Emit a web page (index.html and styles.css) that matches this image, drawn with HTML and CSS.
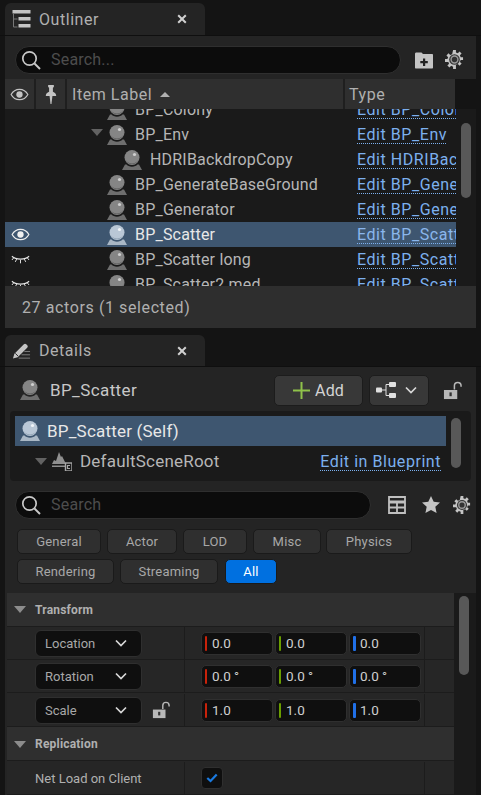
FILE: index.html
```html
<!DOCTYPE html>
<html lang="en">
<head>
  <meta charset="UTF-8">
  <title>Outliner and Details</title>
  <link rel="stylesheet" href="styles.css">
</head>
<body>
  <svg class="defs" width="0" height="0">
    <symbol id="actor" viewBox="0 0 20 20">
      <circle cx="10" cy="7.5" r="7.5" fill="#858585"/>
      <path d="M3.2 7.5a6.8 6.8 0 0 0 13.6 0a6.8 6 0 0 1-13.6 0z" fill="#5e5e5e"/>
      <circle cx="12.5" cy="4.5" r="1.6" fill="#cfcfcf"/>
      <path d="M3 14.5h1.6c1 1.4 3 2.2 5.4 2.2s4.4-.8 5.4-2.2H17l3 5.5H0z" fill="#6e6e6e"/>
    </symbol>
    <symbol id="actor-sel" viewBox="0 0 20 20">
      <circle cx="10" cy="7.5" r="7.5" fill="#b9c7d6"/>
      <path d="M3.2 7.5a6.8 6.8 0 0 0 13.6 0a6.8 6 0 0 1-13.6 0z" fill="#8ea0b2"/>
      <circle cx="12.5" cy="4.5" r="1.6" fill="#f0f4f8"/>
      <path d="M3 14.5h1.6c1 1.4 3 2.2 5.4 2.2s4.4-.8 5.4-2.2H17l3 5.5H0z" fill="#a9b7c5"/>
    </symbol>
    <symbol id="search" viewBox="0 0 20 20">
      <circle cx="8.5" cy="8.5" r="6.7" fill="none" stroke="#c8c8c8" stroke-width="1.7"/>
      <path d="M13.5 13.5l5.5 5.5" stroke="#c8c8c8" stroke-width="1.9"/>
    </symbol>
    <symbol id="gear" viewBox="0 0 20 20">
      <path d="M8.5 0h3v2.5l2 .8 1.8-1.8 2.2 2.2-1.8 1.8.8 2h2.5v3h-2.5l-.8 2 1.8 1.8-2.2 2.2-1.8-1.8-2 .8V20h-3v-2.5l-2-.8-1.8 1.8-2.2-2.2 1.8-1.8-.8-2H0v-3h2.500l.8-2-1.800-1.800 2.200-2.200 1.800 1.800 2-.8z" fill="#c4c4c4"/>
      <circle cx="10" cy="10" r="5.6" fill="#333"/>
      <circle cx="10" cy="10" r="3.6" fill="none" stroke="#9a9a9a" stroke-width="1.5"/>
    </symbol>
    <symbol id="close" viewBox="0 0 10 10">
      <path d="M1.2 1.2l7.6 7.6M8.8 1.2L1.2 8.8" stroke="#d0d0d0" stroke-width="2"/>
    </symbol>
    <symbol id="eye-shut" viewBox="0 0 20 12">
      <path d="M1 2c4 4 14 4 18 0" fill="none" stroke="#e4e4e4" stroke-width="1.3"/>
      <path d="M3 3.5L1 6M6 5l-1.5 3M10 6v3.5M14 5l1.5 3M17 3.5L19 6" stroke="#e4e4e4" stroke-width="1"/>
    </symbol>
    <symbol id="lock" viewBox="0 0 20 20">
      <path d="M12 9V5a3.5 3.5 0 0 1 7 0v1" fill="none" stroke="#b8b8b8" stroke-width="1.6"/>
      <path d="M1 9.500h14V19H1z" fill="#b8b8b8"/>
      <rect x="6.8" y="12" width="2.4" height="4" fill="#333"/>
    </symbol>
    <symbol id="chev" viewBox="0 0 12 8">
      <path d="M1 1.5l5 5 5-5" fill="none" stroke="#d8d8d8" stroke-width="1.7"/>
    </symbol>
  </svg>

  <div class="tab-strip">
    <div class="tab">
      <svg class="tab-icon" viewBox="0 0 18 18">
        <path d="M0 0h18v3.5H0zM6 7h12v3.5H6zM6 14h12v3.5H6z" fill="#c4c4c4"/>
        <path d="M1 4v13h4M1 9h4" fill="none" stroke="#777" stroke-width="1"/>
      </svg>
      <span class="tab-label">Outliner</span>
      <svg class="tab-close"><use href="#close"/></svg>
    </div>
  </div>

  <section class="outliner">
    <div class="toolbar">
      <div class="search search-outliner">
        <svg class="search-icon"><use href="#search"/></svg>
        <span>Search...</span>
      </div>
      <svg class="folder-add" viewBox="0 0 18 18">
        <path d="M0 3c0-1 .5-1.5 1.5-1.5h5L8 3h9c.6 0 1 .4 1 1v12.5c0 .6-.4 1-1 1H1c-.6 0-1-.4-1-1z" fill="#c4c4c4"/>
        <path d="M8 7.5h2.200v2.600h2.600v2.200h-2.600v2.600H8v-2.600H5.300v-2.200H8z" fill="#222"/>
      </svg>
      <svg class="tool-gear"><use href="#gear"/></svg>
    </div>

    <div class="list-head">
      <div class="head-cell head-eye">
        <svg class="eye" viewBox="0 0 20 14">
          <path d="M1 7c4-7.5 14-7.5 18 0c-4 7.5-14 7.5-18 0z" fill="none" stroke="#c4c4c4" stroke-width="1.3"/>
          <circle cx="10" cy="7" r="3.4" fill="#c4c4c4"/>
        </svg>
      </div>
      <div class="head-cell head-pin">
        <svg class="pin" viewBox="0 0 12 20">
          <path d="M3 0h6v2L8 3v4c2 .8 3.5 2.2 3.5 4.5H.5C.5 9.2 2 7.8 4 7V3L3 2z" fill="#c4c4c4"/>
          <path d="M4.5 11.5h3L6.500 20h-1z" fill="#c4c4c4"/>
        </svg>
      </div>
      <div class="head-cell head-label">Item Label <i class="sort-up"></i></div>
      <div class="head-cell head-type">Type</div>
    </div>

    <div class="tree">
      <div class="tree-rows">
        <div class="row"><div class="row-eye"></div><div class="row-name depth-2"><svg class="actor"><use href="#actor"/></svg>BP_Colony</div><div class="row-type"><a>Edit BP_Colony</a></div></div>
        <div class="row"><div class="row-eye"></div><div class="row-name depth-2"><i class="arrow"></i><svg class="actor"><use href="#actor"/></svg>BP_Env</div><div class="row-type"><a>Edit BP_Env</a></div></div>
        <div class="row"><div class="row-eye"></div><div class="row-name depth-3"><svg class="actor"><use href="#actor"/></svg>HDRIBackdropCopy</div><div class="row-type"><a>Edit HDRIBackdropCopy</a></div></div>
        <div class="row"><div class="row-eye"></div><div class="row-name depth-2"><svg class="actor"><use href="#actor"/></svg>BP_GenerateBaseGround</div><div class="row-type"><a>Edit BP_GenerateBaseGround</a></div></div>
        <div class="row"><div class="row-eye"></div><div class="row-name depth-2"><svg class="actor"><use href="#actor"/></svg>BP_Generator</div><div class="row-type"><a>Edit BP_Generator</a></div></div>
        <div class="row selected">
          <div class="row-eye">
            <svg class="eye" viewBox="0 0 20 14">
              <path d="M1 7c4-7.5 14-7.5 18 0c-4 7.5-14 7.5-18 0z" fill="none" stroke="#f0f0f0" stroke-width="1.3"/>
              <circle cx="10" cy="7" r="3.4" fill="#f0f0f0"/>
            </svg>
          </div>
          <div class="row-name depth-2"><svg class="actor"><use href="#actor-sel"/></svg>BP_Scatter</div>
          <div class="row-type"><a>Edit BP_Scatter</a></div>
        </div>
        <div class="row"><div class="row-eye"><svg class="eye-shut"><use href="#eye-shut"/></svg></div><div class="row-name depth-2"><svg class="actor"><use href="#actor"/></svg>BP_Scatter long</div><div class="row-type"><a>Edit BP_Scatter</a></div></div>
        <div class="row"><div class="row-eye"><svg class="eye-shut"><use href="#eye-shut"/></svg></div><div class="row-name depth-2"><svg class="actor"><use href="#actor"/></svg>BP_Scatter2 med</div><div class="row-type"><a>Edit BP_Scatter</a></div></div>
      </div>
      <div class="scroll-thumb tree-thumb"></div>
    </div>

    <div class="status">27 actors (1 selected)</div>
  </section>

  <div class="tab-strip details-strip">
    <div class="tab">
      <svg class="tab-icon" viewBox="0 0 20 18">
        <path d="M1 17l1.500-5L12.500 2c.8-.8 1.700-.8 2.500 0l1 1c.8.8.8 1.700 0 2.500L6 15.500z" fill="#c4c4c4"/>
        <path d="M3.500 11.500l3 3" stroke="#242424" stroke-width="1"/>
        <path d="M13 9.500h6M10 13h9M7 16.500h12" stroke="#808080" stroke-width="1"/>
      </svg>
      <span class="tab-label">Details</span>
      <svg class="tab-close"><use href="#close"/></svg>
    </div>
  </div>

  <section class="details">
    <div class="details-head">
      <svg class="actor actor-head"><use href="#actor"/></svg>
      <span class="details-title">BP_Scatter</span>
      <div class="btn-add">
        <svg class="plus" viewBox="0 0 17 17"><path d="M7.500 0h2v7.500H17v2H9.500V17h-2V9.500H0v-2h7.500z" fill="#8fc24a"/></svg>
        Add
      </div>
      <div class="btn-graph">
        <svg class="graph-icon" viewBox="0 0 20 16">
          <path d="M6 8h4M10 2.500v11M10 2.500h3M10 13.500h3" stroke="#e0e0e0" stroke-width="1" fill="none"/>
          <rect x="0" y="5.5" width="6" height="5" rx="1" fill="#e0e0e0"/>
          <rect x="13" y="0" width="7" height="5" rx="1" fill="#e0e0e0"/>
          <rect x="13" y="11" width="7" height="5" rx="1" fill="#e0e0e0"/>
        </svg>
        <svg class="chev"><use href="#chev"/></svg>
      </div>
      <svg class="head-lock"><use href="#lock"/></svg>
    </div>

    <div class="comp-tree">
      <div class="comp-rows">
        <div class="comp-row comp-selected"><svg class="actor"><use href="#actor-sel"/></svg>BP_Scatter (Self)</div>
        <div class="comp-row comp-root">
          <i class="arrow"></i>
          <svg class="root-icon" viewBox="0 0 20 19">
            <path d="M7 0l2 5 1-1 3 6 1 2H0l2-4 2 1z" fill="#8f8f8f"/>
            <path d="M0 13.500h13V15H0z" fill="#8f8f8f"/>
            <rect x="13.5" y="11" width="6.5" height="8" fill="#1a1a1a" stroke="#a8a8a8" stroke-width="1.4"/>
            <path d="M18 13.500h-2.500v3H18" fill="none" stroke="#a8a8a8" stroke-width="1.2"/>
          </svg>
          DefaultSceneRoot
          <a class="comp-link">Edit in Blueprint</a>
        </div>
      </div>
      <div class="scroll-thumb comp-thumb"></div>
    </div>

    <div class="details-search">
      <div class="search search-details">
        <svg class="search-icon"><use href="#search"/></svg>
        <span>Search</span>
      </div>
      <svg class="table-icon" viewBox="0 0 18 18">
        <path d="M1 1h16v16H1z" fill="none" stroke="#c0c0c0" stroke-width="1.8"/>
        <path d="M1 6h16" stroke="#c0c0c0" stroke-width="3"/>
        <path d="M1 11.500h16M9 6v11" stroke="#c0c0c0" stroke-width="1.8"/>
      </svg>
      <svg class="star" viewBox="0 0 18 17"><path d="M9 0l2.700 5.800 6.300.7-4.700 4.300 1.300 6.200L9 13.900 3.400 17l1.300-6.200L0 6.500l6.300-.7z" fill="#c4c4c4"/></svg>
      <svg class="details-gear"><use href="#gear"/></svg>
    </div>

    <div class="filters">
      <span class="chip chip-general">General</span>
      <span class="chip chip-actor">Actor</span>
      <span class="chip chip-lod">LOD</span>
      <span class="chip chip-misc">Misc</span>
      <span class="chip chip-physics">Physics</span>
      <span class="chip chip-rendering">Rendering</span>
      <span class="chip chip-streaming">Streaming</span>
      <span class="chip chip-all">All</span>
    </div>

    <div class="props">
      <div class="props-list">
        <div class="section-head"><i class="arrow arrow-section"></i>Transform</div>

        <div class="prop-row">
          <div class="prop-left">
            <div class="combo">Location<svg class="chev"><use href="#chev"/></svg></div>
          </div>
          <div class="prop-mid">
            <div class="num"><i class="axis axis-x"></i>0.0</div>
            <div class="num"><i class="axis axis-y"></i>0.0</div>
            <div class="num"><i class="axis axis-z"></i>0.0</div>
          </div>
          <div class="prop-end"></div>
        </div>
        <div class="prop-row">
          <div class="prop-left">
            <div class="combo">Rotation<svg class="chev"><use href="#chev"/></svg></div>
          </div>
          <div class="prop-mid">
            <div class="num"><i class="axis axis-x"></i>0.0 °</div>
            <div class="num"><i class="axis axis-y"></i>0.0 °</div>
            <div class="num"><i class="axis axis-z"></i>0.0 °</div>
          </div>
          <div class="prop-end"></div>
        </div>
        <div class="prop-row prop-low">
          <div class="prop-left">
            <div class="combo">Scale<svg class="chev"><use href="#chev"/></svg></div>
            <svg class="scale-lock"><use href="#lock"/></svg>
          </div>
          <div class="prop-mid">
            <div class="num"><i class="axis axis-x"></i>1.0</div>
            <div class="num"><i class="axis axis-y"></i>1.0</div>
            <div class="num"><i class="axis axis-z"></i>1.0</div>
          </div>
          <div class="prop-end"></div>
        </div>

        <div class="section-head section-low"><i class="arrow arrow-section"></i>Replication</div>

        <div class="prop-row prop-low">
          <div class="prop-left prop-text">Net Load on Client</div>
          <div class="prop-mid">
            <div class="check">
              <svg viewBox="0 0 14 11"><path d="M1.500 5.500l3.800 3.500L12.500 1.500" fill="none" stroke="#1a7ae0" stroke-width="2.6"/></svg>
            </div>
          </div>
          <div class="prop-end"></div>
        </div>
      </div>
      <div class="props-scroll"><div class="scroll-thumb props-thumb"></div></div>
    </div>
  </section>
</body>
</html>
```

FILE: styles.css
```css
* { box-sizing: border-box; }
html, body { height: 100%; }
body { margin: 0; width: 481px; height: 795px; overflow: hidden; background: #141414; color: #b6b6b6; font-family: Roboto, "Liberation Sans", sans-serif; font-size: 16px; letter-spacing: 0.2px; }
i { display: block; }
a { color: #7cb0ee; text-decoration: underline dotted #7cb0ee 1px; text-underline-offset: 3px; white-space: nowrap; letter-spacing: 0.55px; }
.defs { position: absolute; }

.tab-strip { height: 36px; padding: 3px 0 0 5px; border-bottom: 1px solid #0f0f0f; }
.details-strip { height: 32px; padding-top: 0; margin-top: 7px; }
.tab { width: 200px; height: 100%; padding: 0 18px 0 7px; display: flex; align-items: center; background: #242424; border-radius: 6px 6px 0 0; }
.tab-icon { width: 19px; height: 18px; flex: none; margin-right: 8px; }
.tab-label { flex: 1; color: #b0b0b0; letter-spacing: 0.55px; }
.tab-close { width: 10px; height: 10px; flex: none; }

.outliner { width: 471px; margin-left: 5px; }
.toolbar { height: 43px; background: #242424; display: flex; align-items: center; padding: 4px 10px 0; }
.search { height: 28px; border-radius: 14px; background: #0c0c0c; border: 1px solid #2f2f2f; display: flex; align-items: center; padding-left: 5px; color: #4d4d4d; }
.search-icon { width: 20px; height: 20px; flex: none; margin-right: 10px; }
.search-outliner { width: 386px; }
.folder-add { width: 18px; height: 18px; margin-left: 14px; }
.tool-gear { width: 19px; height: 19px; margin-left: 12px; }

.list-head { width: 450px; height: 30px; display: flex; background: #2f2f2f; color: #b0b0b0; letter-spacing: 0.55px; }
.head-cell { display: flex; align-items: center; border-right: 2px solid #1f1f1f; }
.head-eye { width: 31px; justify-content: center; }
.head-pin { width: 31px; justify-content: center; }
.head-label { width: 278px; padding-left: 5px; }
.head-type { flex: 1; padding-left: 4px; border-right: none; }
.eye { width: 19px; height: 13px; }
.pin { width: 12px; height: 19px; }
.sort-up { width: 0; height: 0; margin-left: 8px; border: 5px solid transparent; border-top: 0; border-bottom: 5px solid #b0b0b0; }

.tree { height: 177px; background: #1a1a1a; overflow: hidden; position: relative; }
.tree-rows { width: 451px; margin-top: -12px; }
.row { height: 25px; display: flex; align-items: center; white-space: nowrap; }
.row.selected { background: #3e5670; color: #e8e8e8; }
.row-eye { width: 30px; display: flex; justify-content: center; flex: none; }
.eye-shut { width: 19px; height: 12px; }
.row-name { flex: none; width: 322px; display: flex; align-items: center; position: relative; }
.depth-2 { padding-left: 72px; }
.depth-3 { padding-left: 87px; }
.actor { width: 20px; height: 20px; flex: none; margin-right: 8px; }
.arrow { width: 0; height: 0; border: 6px solid transparent; border-bottom: 0; border-top: 7px solid #626262; }
.row-name .arrow { position: absolute; left: 56px; top: 4px; }
.row-type { width: 99px; overflow: hidden; }
.row.selected a { color: #8ab6ec; }
.scroll-thumb { background: #585858; border-radius: 5px; width: 10px; }
.tree-thumb { position: absolute; left: 456px; top: 14px; height: 75px; }
.status { height: 42px; background: #2e2e2e; padding-left: 17px; display: flex; align-items: center; color: #b0b0b0; letter-spacing: 0.6px; }

.details { width: 471px; height: 428px; margin-left: 5px; background: #242424; }
.details-head { height: 44px; display: flex; align-items: center; padding: 2px 14px 0 15px; }
.actor-head { margin-right: 10px; }
.details-title { flex: 1; color: #c8c8c8; font-size: 17px; letter-spacing: 0.4px; }
.btn-add, .btn-graph { height: 31px; display: flex; align-items: center; background: #383838; border: 1px solid #1c1c1c; border-radius: 5px; color: #d4d4d4; }
.btn-add { width: 89px; padding-left: 18px; gap: 5px; }
.plus { width: 17px; height: 17px; }
.btn-graph { width: 60px; margin-left: 6px; padding-left: 6px; gap: 9px; }
.graph-icon { width: 20px; height: 16px; }
.chev { width: 12px; height: 8px; flex: none; }
.head-lock { width: 19px; height: 19px; margin-left: 14px; }

.comp-tree { width: 461px; height: 70px; margin-left: 5px; background: #1a1a1a; border-radius: 4px; padding: 5px; display: flex; }
.comp-rows { width: 431px; flex: none; }
.comp-row { height: 30px; display: flex; align-items: center; }
.comp-selected { background: #3e5670; color: #e8e8e8; padding-left: 5px; font-size: 17px; }
.comp-selected .actor { margin-right: 7px; }
.comp-root { padding-left: 20px; font-size: 17px; }
.comp-root .arrow { margin-right: 5px; }
.root-icon { width: 20px; height: 19px; margin-right: 8px; }
.comp-link { margin-left: auto; margin-right: 5px; font-size: 16px; }
.comp-thumb { height: 50px; margin: 2px 0 0 5px; }

.details-search { height: 47px; display: flex; align-items: center; padding: 0 0 0 10px; }
.search-details { width: 356px; }
.table-icon { width: 18px; height: 18px; margin-left: 17px; }
.star { width: 18px; height: 17px; margin-left: 16px; }
.details-gear { width: 18px; height: 18px; margin-left: 13px; }

.filters { display: flex; flex-wrap: wrap; align-content: flex-start; gap: 5px 6px; padding: 1px 12px 0; height: 65px; }
.chip { height: 25px; border-radius: 5px; background: #2f2f2f; border: 1px solid #1a1a1a; display: flex; align-items: center; justify-content: center; font-size: 13px; color: #a8a8a8; }
.chip-general { width: 84px; }
.chip-actor { width: 70px; }
.chip-lod { width: 64px; }
.chip-misc { width: 68px; }
.chip-physics { width: 86px; margin-left: -1px; }
.chip-rendering { width: 97px; }
.chip-streaming { width: 98px; }
.chip-all { width: 52px; margin-left: 1px; background: #0070e0; color: #fff; }

.props { display: flex; height: 203px; margin-left: 2px; }
.props-list { width: 447px; flex: none; }
.section-head { height: 34px; background: #2f2f2f; border-bottom: 1px solid #1c1c1c; display: flex; align-items: center; font-size: 12px; font-weight: 700; color: #b0b0b0; padding-left: 7px; }
.section-low { padding-top: 1px; }
.arrow-section { margin-right: 9px; border-top-color: #8c8c8c; }
.prop-row { height: 33px; display: flex; border-bottom: 1px solid #1c1c1c; background: #262626; font-size: 13px; letter-spacing: 0; }
.prop-low { height: 34px; padding-top: 1px; }
.prop-left { width: 178px; flex: none; display: flex; align-items: center; padding-left: 28px; border-right: 1px solid #1c1c1c; }
.prop-text { padding-left: 28px; color: #b0b0b0; }
.prop-mid { width: 240px; flex: none; display: flex; align-items: center; gap: 2px; padding-left: 16px; border-right: 1px solid #1c1c1c; }
.combo { width: 107px; height: 27px; background: #0f0f0f; border: 1px solid #2f2f2f; border-radius: 6px; display: flex; align-items: center; justify-content: space-between; padding: 0 14px 0 9px; color: #a8a8a8; }
.scale-lock { width: 18px; height: 18px; margin-left: 10px; }
.num { width: 72px; height: 23px; background: #0f0f0f; border: 1px solid #2f2f2f; border-radius: 5px; display: flex; align-items: center; color: #d0d0d0; padding-left: 3px; font-size: 13.5px; }
.axis { width: 2px; height: 15px; border-radius: 1px; margin-right: 5px; }
.axis-x { background: #c8220a; }
.axis-y { background: #6a9e00; }
.axis-z { background: #2070e8; width: 3px; margin-right: 4px; }
.check { width: 22px; height: 22px; background: #0f0f0f; border: 1px solid #2f2f2f; border-radius: 4px; display: flex; align-items: center; justify-content: center; }
.check svg { width: 12px; height: 10px; }
.prop-end { flex: 1; }

.props-scroll { width: 22px; background: #1a1a1a; padding: 3px 0 0 5px; }
.props-thumb { height: 79px; }
```
